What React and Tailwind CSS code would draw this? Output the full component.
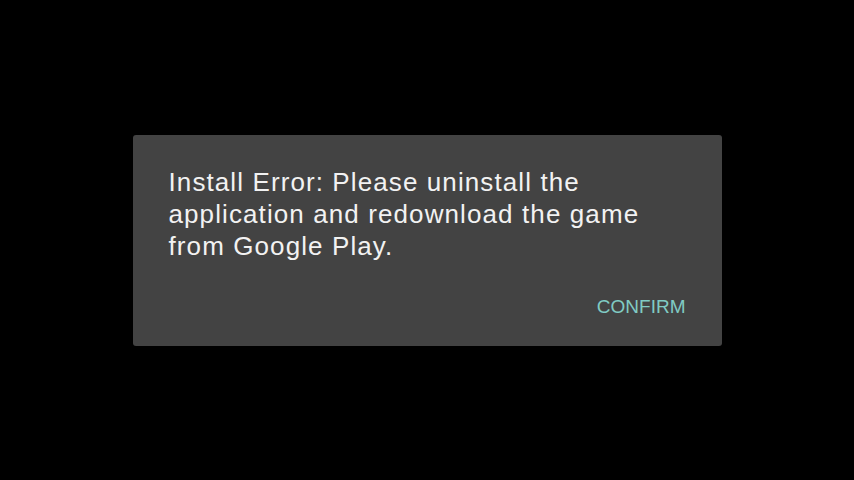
const App = () => {
  return (
    <div
      className="w-[854px] h-[480px] bg-black flex items-center justify-center"
      style={{ fontFamily: '"Liberation Sans", Arial, sans-serif' }}
    >
      {/* DIALOG */}
      <div className="w-[589px] h-[211px] bg-[#434343] rounded-[3px] pt-[31px] pl-[36px] pr-[36px] flex flex-col">
        <p className="text-[26px] leading-[32px] tracking-[1.1px] text-[#f2f2f2] whitespace-nowrap">
          Install Error: Please uninstall the
          <br />
          application and redownload the game
          <br />
          from Google Play.
        </p>

        {/* BUTTON */}
        <div className="flex justify-end mt-[33px]">
          <button className="text-[19px] leading-[24px] text-[#80cbc4]">
            CONFIRM
          </button>
        </div>
      </div>
    </div>
  );
};

export default App;
